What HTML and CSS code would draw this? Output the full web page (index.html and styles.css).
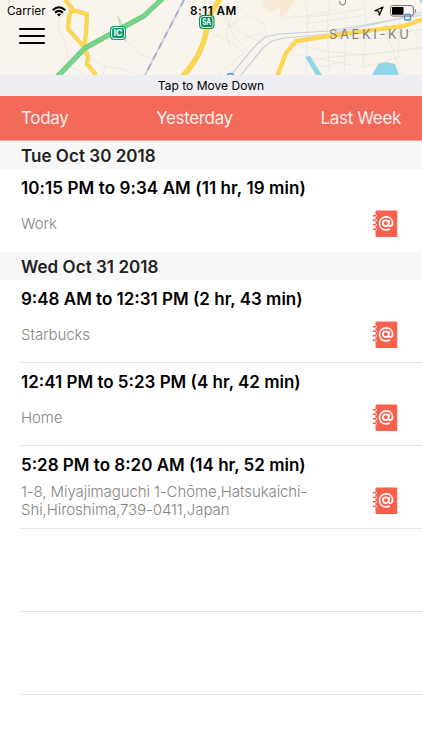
FILE: index.html
```
<!DOCTYPE html>
<html lang="en">
<head>
    <meta charset="UTF-8">
    <meta name="viewport" content="width=device-width, initial-scale=1.0">
    <title>Location History</title>
    <link rel="stylesheet" href="styles.css">
</head>
<body>
    <!-- Shared contact book icon -->
    <svg class="hidden" width="0" height="0">
        <symbol id="contact-book" viewBox="0 0 26 28">
            <rect x="3.5" y="0.5" width="21.8" height="26.6" rx="1.2" fill="#fb604c"/>
            <path d="M3 5.800h1.800M3 10.300h1.800M3 14.800h1.800M3 19.300h1.800" stroke="#fff" stroke-width="1.800"/>
            <path d="M.8 5.800h3.200M.8 10.300h3.200M.8 14.800h3.200M.8 19.300h3.200" stroke="#fb604c" stroke-width="1.500"/>
            <circle cx="13.800" cy="13.300" r="2.900" fill="none" stroke="#fff" stroke-width="1.700"/>
            <path d="M17.200 10l-.6 4.600c-.1 2.400 4 2.100 4-1.700 0-3.700-2.800-6-6.400-6-3.900 0-6.700 2.800-6.700 6.500 0 4 2.700 6.500 6.600 6.500 1.500 0 2.700-.3 3.800-.9" fill="none" stroke="#fff" stroke-width="1.600"/>
        </symbol>
    </svg>

    <header class="map">
        <svg class="map-canvas" viewBox="0 0 422 75" width="422" height="75">
            <rect width="422" height="75" fill="#f9f5ed"/>
            <path d="M262 0h20l-4 9-8 4-8-7z" fill="#f6ecd9"/>
            <path d="M280 0h15l-8 13-7 5z" fill="#f8ead0"/>
            <!-- Minor roads -->
            <g fill="none" stroke="#e9e5de" stroke-width="0.8">
                <path d="M65 0l-5 12-2 14 8 20 4 20 15 9M88 58l16 8 14 2 22 7M105 67l-2 8M124 40l8 5 8 9M140 55l12 3"/>
                <path d="M212 33l20 10 12 10M222 22l25 13 16 9M224 13l10 24 14 13M232 15l-6 18 4 14M240 8l-9 20M227 28l22-14M250 15l13 8 5 15M244 38l19-5M218 75l28-24"/>
                <path d="M305 0l3 17-2 57M284 18l24-2 25-6M330 0l-3 22 2 50M346 13l-2 62M364 0l2 21-3 48M386 24l3 16 7 19 5 16M400 20l-2 38M306 18l56-9M306 24l60-9M289 43l36 8 39 4 58-8M306 60l37-4 58-5 21-3M299 55l53 10M310 69l31-7M363 67l37-10M330 30l23 7 30 2M372 35l50-5M405 22l17 18"/>
            </g>
            <path d="M118 16l3 12 5 14M119 18l4 8" fill="none" stroke="#9fd0ad" stroke-width="0.8"/>
            <!-- Water -->
            <path d="M305 57l5-1 12 19h-6z" fill="#91d5e6"/>
            <path d="M378 64l8-2 9 2 4 11h-27l4-7z" fill="#91d5e6"/>
            <path d="M420 0h2v3h-2z" fill="#91d5e6"/>
            <!-- Railways -->
            <path d="M184 0L145 75" stroke="#d3d3e6" stroke-width="2"/>
            <path d="M184 0L145 75" stroke="#a3a8d3" stroke-width="1.600" stroke-dasharray="7 5"/>
            <g fill="none" stroke="#c7d0df" stroke-width="1.2">
                <path d="M231 75l24-29 10-9 14-3 50-3 93-16M241 75l22-27 9-7 12-3 45-4 60-13 33-9"/>
            </g>
            <!-- Main roads -->
            <g fill="none" stroke-linejoin="round">
                <g stroke="#f0c750">
                    <path d="M65 0l7 8-3 9-1 12 17 19M71 10l16 4-1 20-2 14 4 8-1 8 9 11" stroke-width="4"/>
                    <path d="M220-1c-8 11-13 20-14 34-4 17-10 28-23 43" stroke-width="5.200"/>
                    <path d="M277 77l9-24 10-12 54-8 54-7 20-7" stroke-width="4"/>
                </g>
                <g stroke="#fdd84e">
                    <path d="M65 0l7 8-3 9-1 12 17 19M71 10l16 4-1 20-2 14 4 8-1 8 9 11" stroke-width="3.200"/>
                    <path d="M220-1c-8 11-13 20-14 34-4 17-10 28-23 43" stroke-width="4.200"/>
                    <path d="M277 77l9-24 10-12 54-8 54-7 20-7" stroke-width="3.300"/>
                </g>
                <path d="M57 77l28-29 33-18 26-14 19-18" stroke="#5fc274" stroke-width="5"/>
                <path d="M57 77l28-29 33-18 26-14 19-18" stroke="#77d488" stroke-width="3.800"/>
            </g>
            <!-- Road badges -->
            <rect x="110" y="26" width="16" height="14" rx="4" fill="#159b70"/>
            <rect x="111.500" y="27.500" width="13" height="11" rx="2.500" fill="none" stroke="#e3f5ed" stroke-width="1"/>
            <text class="badge-label" x="118" y="36.200">IC</text>
            <rect x="199" y="15" width="15.500" height="14" rx="4" fill="#0d8a56"/>
            <rect x="200.500" y="16.500" width="12.500" height="11" rx="2.500" fill="none" stroke="#e3f5ed" stroke-width="1"/>
            <text class="badge-label" x="206.700" y="25.200" textLength="9" lengthAdjust="spacingAndGlyphs">SA</text>
            <!-- Stations -->
            <rect x="404.500" y="14.500" width="6" height="5.500" rx="1" fill="#dcebfa" stroke="#4c8fde" stroke-width="1.300"/>
            <path d="M227 75q3.500-3 7 0" fill="none" stroke="#4c8fde" stroke-width="1.300"/>
            <path d="M339.500 1q0 4 3 4t3-3V0" fill="none" stroke="#777" stroke-width="1"/>
            <text class="district" x="329" y="38.600" textLength="80">SAEKI-KU</text>
        </svg>

        <div class="status-bar">
            <div class="carrier">
                <span>Carrier</span>
                <svg width="14" height="11" viewBox="0 0 14 11">
                    <g fill="none" stroke="#000" stroke-width="2">
                        <path d="M.7 4.200Q7-1.800 13.300 4.200"/>
                        <path d="M3 6.700q4-3.700 8 0"/>
                    </g>
                    <path d="M4.900 8.300q2.100-1.700 4.200 0L7 10.600z"/>
                </svg>
            </div>
            <div class="clock">8:11 AM</div>
            <div class="indicators">
                <svg width="10" height="10" viewBox="0 0 10 10">
                    <path d="M9 1L.9 4.700l3.900.5.500 4z" fill="none" stroke="#000" stroke-width="1.200" stroke-linejoin="round"/>
                </svg>
                <svg width="27" height="12" viewBox="0 0 27 12">
                    <rect x=".6" y=".6" width="22.800" height="10.500" rx="2.400" fill="none" stroke="#77746f" stroke-width="1"/>
                    <rect x="2" y="2" width="11.500" height="7.700" rx=".8"/>
                    <path d="M24.800 4v4q1.300-.6 1.300-2t-1.300-2z" fill="#77746f"/>
                </svg>
            </div>
        </div>

        <button class="menu-btn" aria-label="Menu">
            <span></span>
            <span></span>
            <span></span>
        </button>
    </header>

    <div class="move-bar">Tap to Move Down</div>

    <nav class="day-tabs">
        <a href="#">Today</a>
        <a href="#">Yesterday</a>
        <a href="#">Last Week</a>
    </nav>

    <main class="visits">
        <h2>Tue Oct 30 2018</h2>
        <div class="visit last">
            <h3 class="wide">10:15 PM to 9:34 AM (11 hr, 19 min)</h3>
            <div class="place">
                <p>Work</p>
                <svg class="contact-icon"><use href="#contact-book"/></svg>
            </div>
        </div>

        <h2>Wed Oct 31 2018</h2>
        <div class="visit">
            <h3>9:48 AM to 12:31 PM (2 hr, 43 min)</h3>
            <div class="place">
                <p>Starbucks</p>
                <svg class="contact-icon"><use href="#contact-book"/></svg>
            </div>
        </div>
        <div class="visit">
            <h3>12:41 PM to 5:23 PM (4 hr, 42 min)</h3>
            <div class="place">
                <p>Home</p>
                <svg class="contact-icon"><use href="#contact-book"/></svg>
            </div>
        </div>
        <div class="visit">
            <h3>5:28 PM to 8:20 AM (14 hr, 52 min)</h3>
            <div class="place">
                <p>1-8, Miyajimaguchi 1-Chōme,Hatsukaichi-<br>Shi,Hiroshima,739-0411,Japan</p>
                <svg class="contact-icon"><use href="#contact-book"/></svg>
            </div>
        </div>
        <div class="visit"></div>
        <div class="visit"></div>
    </main>
</body>
</html>
```
FILE: styles.css
```
* {
    box-sizing: border-box;
}

body, html {
    margin: 0;
    padding: 0;
    height: 100%;
    overflow: hidden;
    font-family: Inter, "Liberation Sans", sans-serif;
    background: #fff;
    color: #000;
}

.hidden {
    position: absolute;
}

.map {
    position: relative;
    height: 75px;
}

.map-canvas {
    display: block;
}

.badge-label {
    font-size: 8.5px;
    font-weight: 700;
    fill: #fff;
    text-anchor: middle;
}

.district {
    font-size: 13px;
    fill: #85827c;
}

/* Sits over the map */
.status-bar {
    position: absolute;
    top: 0;
    left: 0;
    width: 100%;
    height: 22px;
    padding: 0 7px;
    display: grid;
    grid-template-columns: 1fr auto 1fr;
    align-items: center;
    font-size: 11.8px;
}

.carrier, .indicators {
    display: flex;
    align-items: center;
    gap: 6px;
}

.clock {
    font-weight: 600;
    font-size: 11.7px;
    letter-spacing: 0.5px;
    padding-left: 5px;
}

.indicators {
    justify-content: flex-end;
    margin-right: -2px;
}

.menu-btn {
    position: absolute;
    top: 28px;
    left: 19px;
    width: 26px;
    padding: 0;
    border: none;
    background: none;
    display: flex;
    flex-direction: column;
    gap: 5px;
}

.menu-btn span {
    height: 2px;
    background: #000;
    border-radius: 1px;
}

.move-bar {
    height: 21px;
    line-height: 21px;
    text-align: center;
    font-size: 12px;
    letter-spacing: 0.02px;
    background: #efeef5;
}

.day-tabs {
    height: 45px;
    padding: 0 21px;
    display: flex;
    justify-content: space-between;
    align-items: center;
    background: #f46a5a;
    border-bottom: 1px solid #f6a298;
}

.day-tabs a {
    color: #fff;
    font-size: 17px;
    letter-spacing: -0.35px;
    text-decoration: none;
    opacity: 0.9;
}

.visits h2 {
    height: 28px;
    margin: 0;
    padding-left: 21px;
    line-height: 30px;
    font-size: 17px;
    font-weight: 600;
    letter-spacing: 0.04px;
    color: #222;
    background: #f7f7f7;
}

.visit {
    height: 83px;
    margin-left: 21px;
    padding-top: 8px;
    border-bottom: 1px solid #e3e3e5;
}

.visit.last {
    border-bottom-color: #fff;
}

.visit h3 {
    margin: 0;
    line-height: 22px;
    font-size: 17px;
    font-weight: 600;
    white-space: nowrap;
}

.visit h3.wide {
    letter-spacing: 0.09px;
}

.place {
    height: 49px;
    padding-right: 24px;
    display: flex;
    justify-content: space-between;
    align-items: center;
}

.place p {
    margin: 0;
    font-size: 15px;
    line-height: 18px;
    font-weight: 300;
    letter-spacing: -0.08px;
    color: #858585;
}

.contact-icon {
    width: 26px;
    height: 28px;
}
```
